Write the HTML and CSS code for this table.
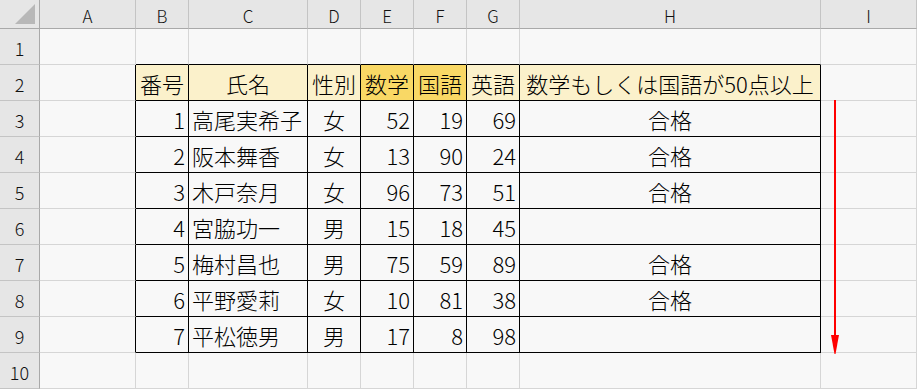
FILE: index.html
```html
<!DOCTYPE html>
<html lang="ja">
<head>
<meta charset="utf-8">
<title>Excel OR</title>
<link rel="stylesheet" href="styles.css">
</head>
<body>
<div class="sheet">
  <div class="grid">
    <div class="corner"><span class="tri"></span></div>
    <div class="ch">A</div><div class="ch">B</div><div class="ch">C</div><div class="ch">D</div><div class="ch">E</div><div class="ch">F</div><div class="ch">G</div><div class="ch">H</div><div class="ch">I</div>

    <div class="rh">1</div>
    <div class="c"></div><div class="c bb"></div><div class="c bb"></div><div class="c bb"></div><div class="c bb"></div><div class="c bb"></div><div class="c bb"></div><div class="c bb"></div><div class="c"></div>

    <div class="rh">2</div>
    <div class="c br"></div>
    <div class="c t cream ctr">番号</div>
    <div class="c t cream ctr">氏名</div>
    <div class="c t cream ctr">性別</div>
    <div class="c t gold ctr">数学</div>
    <div class="c t gold ctr">国語</div>
    <div class="c t cream ctr">英語</div>
    <div class="c t cream ctr">数学もしくは国語が50点以上</div>
    <div class="c"></div>

    <div class="rh">3</div>
    <div class="c br"></div>
    <div class="c t num">1</div><div class="c t left">高尾実希子</div><div class="c t ctr">女</div><div class="c t num">52</div><div class="c t num">19</div><div class="c t num">69</div><div class="c t ctr">合格</div>
    <div class="c"></div>

    <div class="rh">4</div>
    <div class="c br"></div>
    <div class="c t num">2</div><div class="c t left">阪本舞香</div><div class="c t ctr">女</div><div class="c t num">13</div><div class="c t num">90</div><div class="c t num">24</div><div class="c t ctr">合格</div>
    <div class="c"></div>

    <div class="rh">5</div>
    <div class="c br"></div>
    <div class="c t num">3</div><div class="c t left">木戸奈月</div><div class="c t ctr">女</div><div class="c t num">96</div><div class="c t num">73</div><div class="c t num">51</div><div class="c t ctr">合格</div>
    <div class="c"></div>

    <div class="rh">6</div>
    <div class="c br"></div>
    <div class="c t num">4</div><div class="c t left">宮脇功一</div><div class="c t ctr">男</div><div class="c t num">15</div><div class="c t num">18</div><div class="c t num">45</div><div class="c t ctr"></div>
    <div class="c"></div>

    <div class="rh">7</div>
    <div class="c br"></div>
    <div class="c t num">5</div><div class="c t left">梅村昌也</div><div class="c t ctr">男</div><div class="c t num">75</div><div class="c t num">59</div><div class="c t num">89</div><div class="c t ctr">合格</div>
    <div class="c"></div>

    <div class="rh">8</div>
    <div class="c br"></div>
    <div class="c t num">6</div><div class="c t left">平野愛莉</div><div class="c t ctr">女</div><div class="c t num">10</div><div class="c t num">81</div><div class="c t num">38</div><div class="c t ctr">合格</div>
    <div class="c"></div>

    <div class="rh">9</div>
    <div class="c br"></div>
    <div class="c t num">7</div><div class="c t left">平松徳男</div><div class="c t ctr">男</div><div class="c t num">17</div><div class="c t num">8</div><div class="c t num">98</div><div class="c t ctr"></div>
    <div class="c"></div>

    <div class="rh">10</div>
    <div class="c"></div><div class="c"></div><div class="c"></div><div class="c"></div><div class="c"></div><div class="c"></div><div class="c"></div><div class="c"></div><div class="c"></div>
  </div>

  <svg class="arrow" width="16" height="260" viewBox="0 0 16 260">
    <rect x="7" y="0" width="2" height="240" fill="#ff0000"/>
    <polygon points="4,235 12,235 8.5,254 7.5,254" fill="#ff0000"/>
  </svg>
</div>
</body>
</html>
```

FILE: styles.css
```css
html, body {
  margin: 0;
  padding: 0;
  background: #f8f8f8;
}

.sheet {
  position: relative;
  width: 917px;
  height: 389px;
  overflow: hidden;
  font-family: "Noto Sans CJK JP", "Noto Sans", sans-serif;
  color: #000;
}

.grid {
  display: grid;
  grid-template-columns: 40px 96px 53px 119px 53px 53px 53px 53px 301px 96px;
  grid-template-rows: 29px repeat(10, 36px);
}

.grid > div {
  box-sizing: border-box;
  display: flex;
  align-items: center;
  white-space: nowrap;
  overflow: hidden;
}

.corner {
  background: #e6e6e6;
  border-right: 1px solid #a9a9a9;
  border-bottom: 1px solid #a9a9a9;
  position: relative;
  align-items: flex-end !important;
  justify-content: flex-end;
  padding: 0 4px 4px 0;
}

.tri {
  display: block;
  width: 20px;
  height: 20px;
  background: #b8b8b8;
  clip-path: polygon(100% 0, 100% 100%, 0 100%);
}

.ch {
  background: #e6e6e6;
  border-right: 1px solid #c4c4c4;
  border-bottom: 1px solid #a9a9a9;
  justify-content: center;
  font-size: 17px;
  font-weight: 300;
  color: #111;
  line-height: 1;
  padding-top: 2px;
}

.rh {
  background: #e6e6e6;
  border-right: 1px solid #a9a9a9;
  border-bottom: 1px solid #c4c4c4;
  justify-content: center;
  font-size: 18px;
  font-weight: 300;
  color: #111;
  line-height: 1;
  padding-top: 2px;
}

.c {
  background: #f8f8f8;
  border-right: 1px solid #d6d6d6;
  border-bottom: 1px solid #d6d6d6;
  font-size: 22px;
  font-weight: 300;
  line-height: 1;
  padding-top: 1px;
}

.c.bb {
  border-bottom-color: #000;
}

.c.br {
  border-right-color: #000;
}

.c.t {
  border-right-color: #000;
  border-bottom-color: #000;
}

.cream {
  background: #fbf1cb !important;
}

.gold {
  background: #f9d865 !important;
}

.num {
  justify-content: flex-end;
  padding-right: 3px;
}

.ctr {
  justify-content: center;
}

.left {
  justify-content: flex-start;
  padding-left: 3px;
}

.arrow {
  position: absolute;
  left: 827px;
  top: 100px;
}
```
